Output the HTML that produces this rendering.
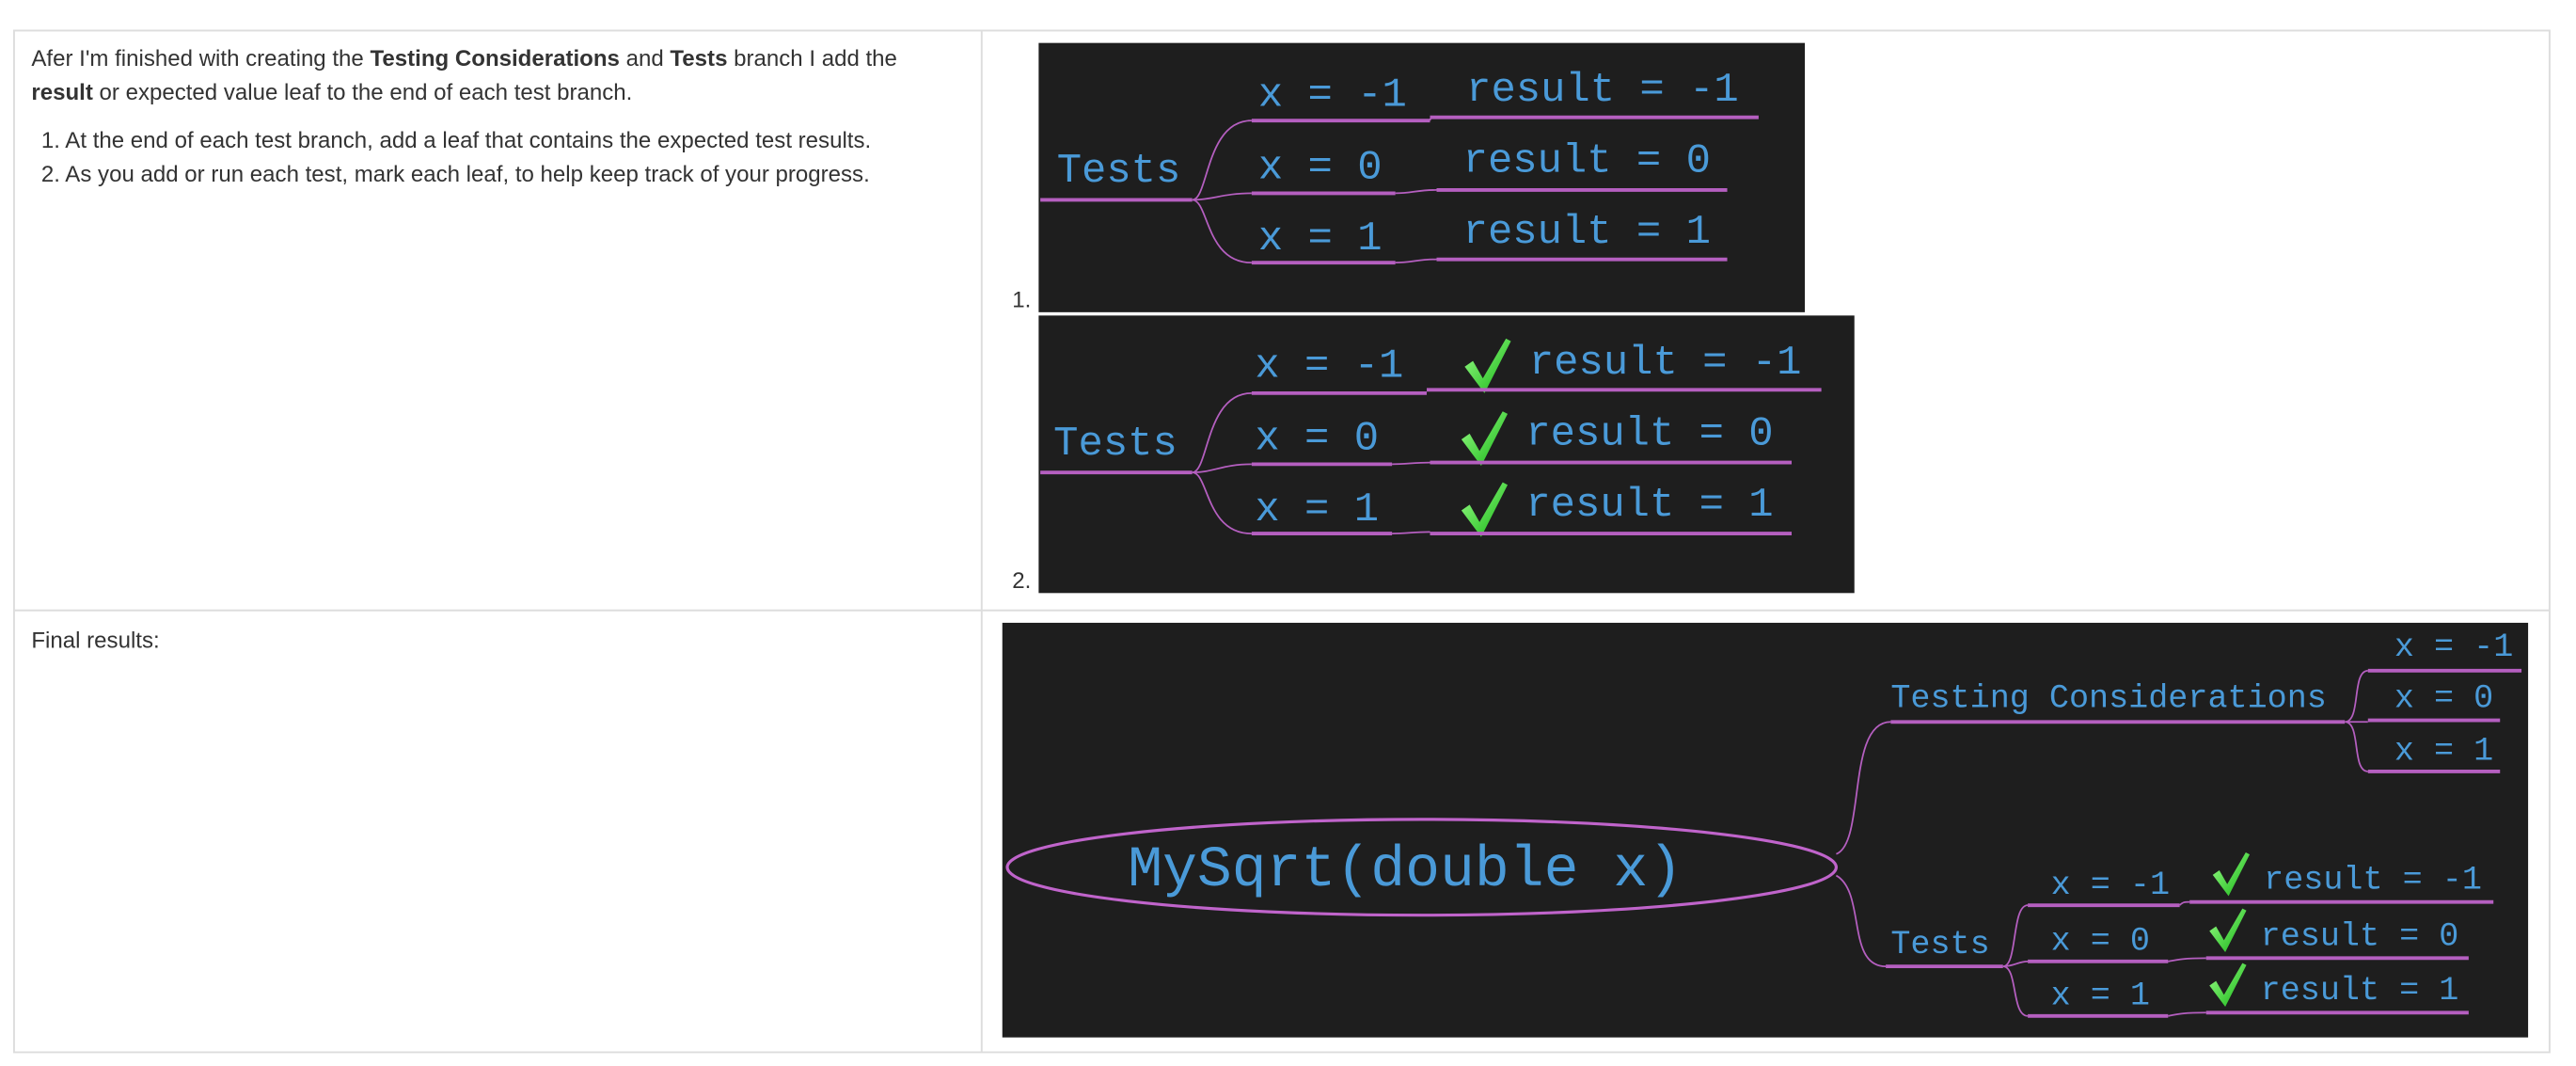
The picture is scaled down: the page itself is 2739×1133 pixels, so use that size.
<!DOCTYPE html>
<html><head><meta charset="utf-8"><style>
html,body{margin:0;padding:0;background:#fff;width:2739px;height:1133px;overflow:hidden}
svg{display:block}
.b{font-family:"Liberation Sans",Arial,sans-serif;font-size:13.7px;fill:#333}
.m{font-family:"Liberation Mono","DejaVu Sans Mono",monospace;fill:#4a9ad8}
.l{stroke:#b55fc0;stroke-width:2.2;fill:none}
.t{stroke:#b55fc0;stroke-width:1;fill:none}
</style></head><body>
<svg width="2739" height="1133" viewBox="0 0 1560 645.3" xmlns="http://www.w3.org/2000/svg">
<defs>
<linearGradient id="g" x1="0" y1="0" x2="1" y2="1"><stop offset="0" stop-color="#9dff8a"/><stop offset="1" stop-color="#12b312"/></linearGradient>
<path id="ck" d="M0,17 L5,13.5 L11,24 L25,0 L28,1.5 L12,33 Z" fill="url(#g)"/>
</defs>
<!-- table -->
<g stroke="#ddd" stroke-width="1.1" fill="none">
<rect x="8.5" y="18.5" width="1535.5" height="618.5"/>
<line x1="594.5" y1="18.5" x2="594.5" y2="637"/>
<line x1="8.5" y1="369.5" x2="1544" y2="369.5"/>
</g>
<text class="b" x="19" y="40">Afer I'm finished with creating the <tspan font-weight="bold">Testing Considerations</tspan> and <tspan font-weight="bold">Tests</tspan> branch I add the</text>
<text class="b" x="19" y="60.5"><tspan font-weight="bold">result</tspan> or expected value leaf to the end of each test branch.</text>
<text class="b" x="25" y="89.5">1. At the end of each test branch, add a leaf that contains the expected test results.</text>
<text class="b" x="25" y="110">2. As you add or run each test, mark each leaf, to help keep track of your progress.</text>
<text class="b" x="19" y="392">Final results:</text>
<text class="b" x="613" y="186">1.</text>
<text class="b" x="613" y="356">2.</text>

<!-- image 1 -->
<rect x="629" y="26" width="464" height="163" fill="#1e1e1e"/>
<g class="m" font-size="25">
<text x="640" y="110">Tests</text>
<text x="762" y="64">x = -1</text><text x="888" y="61">result = -1</text>
<text x="762" y="108">x = 0</text><text x="886" y="104">result = 0</text>
<text x="762" y="151">x = 1</text><text x="886" y="147">result = 1</text>
</g>
<path class="l" d="M630,121 H722"/>
<path class="t" d="M722,121 C732,121 730,73 758,73 M722,121 C735,121 740,117 758,117 M722,121 C732,121 730,159 758,159"/>
<path class="l" d="M758,73 H866 M758,117 H845 M758,159 H845"/>
<path class="t" d="M866,73 C866,71 868,71 870,71 M845,117 C855,117 858,115 870,115 M845,159 C855,159 858,157 870,157"/>
<path class="l" d="M866,71 H1065 M870,115 H1046 M870,157 H1046"/>

<!-- image 2 -->
<rect x="629" y="191" width="494" height="168" fill="#1e1e1e"/>
<g class="m" font-size="25">
<text x="638" y="275">Tests</text>
<text x="760" y="228">x = -1</text><text x="926" y="226">result = -1</text>
<text x="760" y="272">x = 0</text><text x="924" y="269">result = 0</text>
<text x="760" y="315">x = 1</text><text x="924" y="312">result = 1</text>
</g>
<use href="#ck" x="887" y="205"/><use href="#ck" x="885" y="249"/><use href="#ck" x="885" y="292"/>
<path class="l" d="M630,286 H722"/>
<path class="t" d="M722,286 C732,286 730,238 758,238 M722,286 C735,286 740,281 758,281 M722,286 C732,286 730,323 758,323"/>
<path class="l" d="M758,238 H864 M758,281 H843 M758,323 H843"/>
<path class="t" d="M843,281 C852,281 856,280 866,280 M843,323 C852,323 856,322 866,322"/>
<path class="l" d="M864,236 H1103 M866,280 H1085 M866,323 H1085"/>

<!-- image 3 -->
<rect x="607" y="377" width="924" height="251" fill="#1e1e1e"/>
<ellipse cx="861" cy="525" rx="251" ry="29" fill="none" stroke="#c064cb" stroke-width="1.8"/>
<text class="m" x="683" y="536" font-size="35">MySqrt(double x)</text>
<g class="m" font-size="20">
<text x="1145" y="428">Testing Considerations</text>
<text x="1450" y="397">x = -1</text>
<text x="1450" y="428">x = 0</text>
<text x="1450" y="460">x = 1</text>
<text x="1145" y="577">Tests</text>
<text x="1242" y="541">x = -1</text><text x="1371" y="538">result = -1</text>
<text x="1242" y="575">x = 0</text><text x="1369" y="572">result = 0</text>
<text x="1242" y="608">x = 1</text><text x="1369" y="605">result = 1</text>
</g>
<use href="#ck" transform="translate(1340,516) scale(0.8)"/>
<use href="#ck" transform="translate(1338,550) scale(0.8)"/>
<use href="#ck" transform="translate(1338,583) scale(0.8)"/>
<path class="t" d="M1112,517 C1130,510 1118,437 1145,437 M1112,530 C1130,540 1118,585 1142,585"/>
<path class="l" d="M1145,437 H1420 M1142,585 H1213"/>
<path class="t" d="M1420,437 C1430,437 1424,406 1434,406 M1420,437 H1434 M1420,437 C1430,437 1424,467 1434,467"/>
<path class="l" d="M1434,406 H1527 M1434,436 H1514 M1434,467 H1514"/>
<path class="t" d="M1213,585 C1222,585 1218,548 1228,548 M1213,585 C1220,585 1222,582 1228,582 M1213,585 C1222,585 1218,615 1228,615"/>
<path class="l" d="M1228,548 H1320 M1228,582 H1313 M1228,615 H1313"/>
<path class="t" d="M1320,548 C1322,546 1323,546 1326,546 M1313,582 C1318,581 1322,580 1336,580 M1313,615 C1318,614 1322,613 1336,613"/>
<path class="l" d="M1326,546 H1510 M1336,580 H1495 M1336,613 H1495"/>
</svg>
</body></html>
